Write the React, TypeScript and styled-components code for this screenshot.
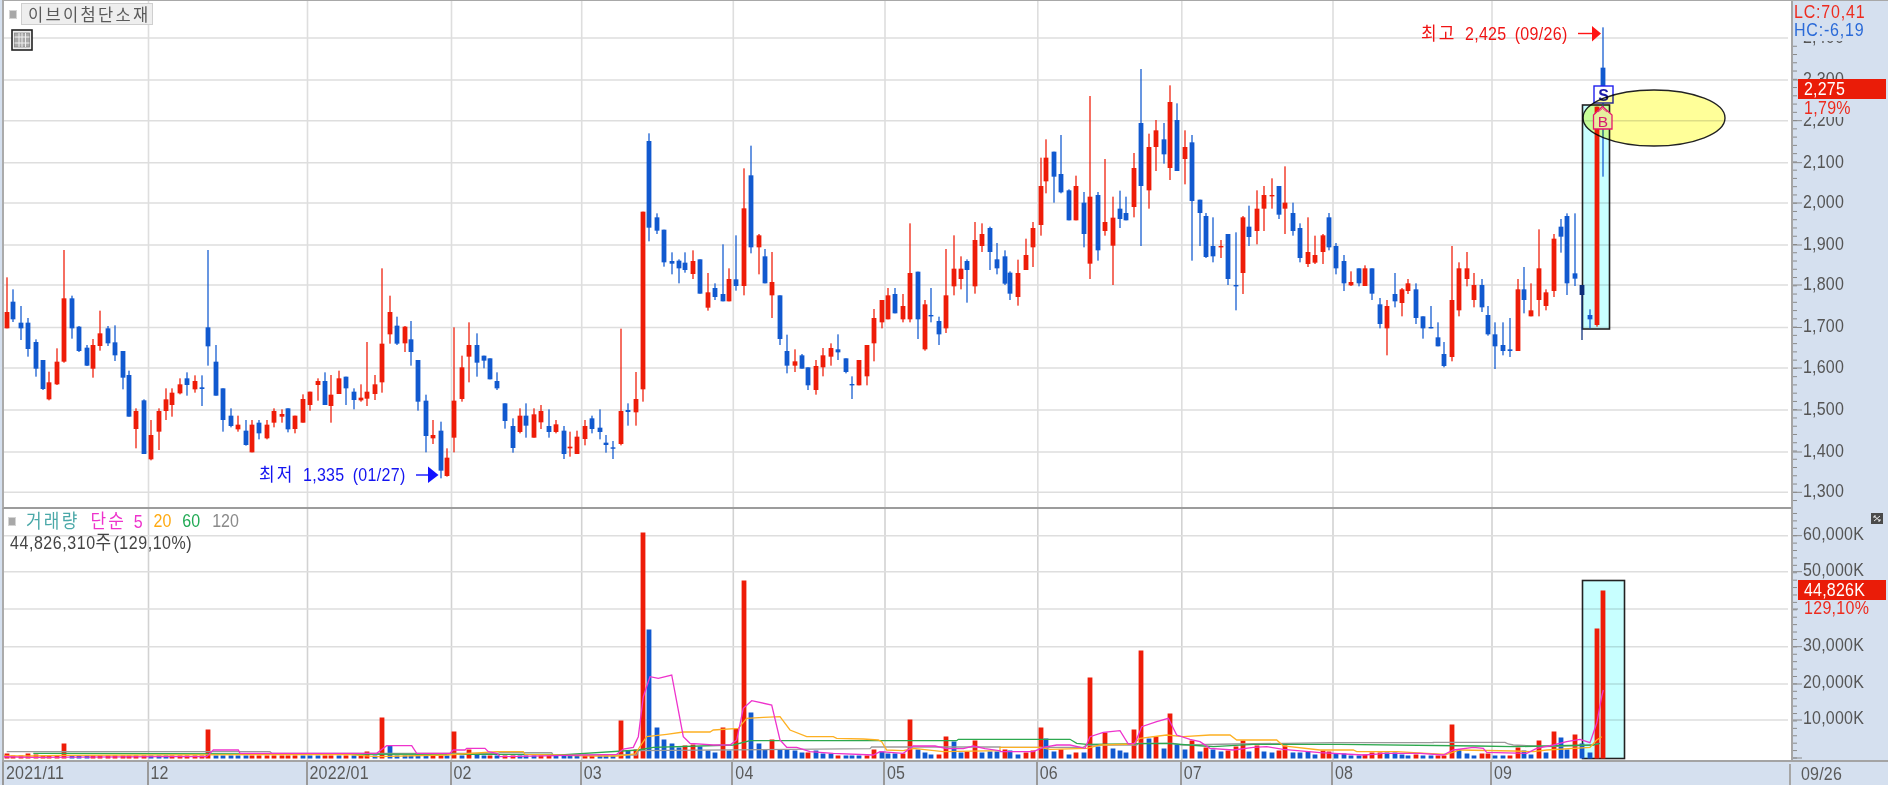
import React from "react";
import styled, { createGlobalStyle, css } from "styled-components";

type Row = [number, "R" | "B" | "D", number, number, number, number];
type Candle = { x: number; c: string; wt: number; bt: number; bb: number; wb: number };

const RED = "#ee1c08";
const BLUE = "#1159cf";
const DARK = "#0c2f7a";

const seg = (rows: Row[], ox: number, sx: number, oy: number): Candle[] =>
  rows.map(([zx, c, wt, bt, bb, wb]) => ({
    x: ox + zx / sx,
    c: c === "R" ? RED : c === "B" ? BLUE : DARK,
    wt: oy + wt / 3,
    bt: oy + bt / 3,
    bb: oy + bb / 3,
    wb: oy + wb / 3,
  }));

const S1: Row[] = [
  [21,"R",82,186,235,235],[39,"B",118,155,208,216],[62,"B",168,218,235,270],[85,"B",204,218,297,320],[107,"B",268,276,356,380],
  [129,"B",330,330,417,420],[148,"R",365,397,448,451],[170,"R",295,335,403,405],[193,"R",0,145,335,338],[215,"B",137,145,235,266],
  [238,"B",228,230,303,306],[260,"B",285,293,347,348],[278,"R",267,285,356,383],[300,"R",182,250,288,302],[323,"B",228,235,280,288],
  [345,"B",226,277,316,333],[368,"B",303,303,383,418],[386,"B",362,375,500,500],[408,"R",475,483,537,595],[431,"B",448,451,612,612],
  [453,"R",510,555,628,631],[476,"R",475,483,545,600],[498,"R",415,448,483,510],[516,"R",415,428,465,500],[539,"R",385,403,430,433],
  [561,"B",367,385,405,437],[584,"R",376,393,418,428],[606,"B",376,412,417,468],[624,"B",0,232,289,347],[647,"B",285,335,437,437],
  [669,"B",415,415,510,545],[692,"B",475,497,528,532],[714,"R",497,524,538,545],[737,"B",510,542,585,587],[755,"R",510,524,607,607],
  [777,"B",510,518,550,568],[800,"R",510,524,565,568],[822,"R",475,483,518,532],[845,"R",478,492,500,518],[863,"B",475,475,538,547],
  [885,"R",497,497,537,550],[908,"R",433,447,518,518],[930,"R",425,425,465,482],[953,"R",385,393,405,452],[975,"B",367,393,465,465],
  [993,"R",375,434,468,518],[1016,"R",362,385,432,432],[1038,"B",380,380,415,465],[1061,"B",415,425,450,478],[1083,"R",403,443,451,455],
  [1101,"R",276,425,446,468],[1124,"R",375,403,432,450],[1146,"R",55,281,397,428],[1169,"R",137,186,253,281],[1191,"B",200,227,281,285],
  [1214,"R",228,230,280,306],[1232,"B",213,268,306,347],[1255,"B",330,330,455,482],[1277,"B",434,452,558,607],[1299,"R",510,555,565,582],
  [1322,"B",515,542,662,685],[1340,"R",595,623,678,680],[1362,"R",232,452,563,607],[1385,"R",317,352,447,455],[1407,"R",217,285,320,397],
  [1430,"B",250,285,338,380],[1452,"B",317,317,332,355],[1470,"B",325,325,388,388],[1492,"B",367,393,415,420],
];
const S2: Row[] = [
  [45,"B",70,70,123,146],[68,"B",115,138,204,218],[90,"R",85,107,156,160],[108,"B",70,107,137,173],[131,"R",85,103,173,173],
  [153,"R",75,93,127,147],[176,"B",88,138,156,173],[198,"R",120,133,156,160],[221,"B",138,152,222,237],[239,"R",155,200,205,230],
  [261,"R",152,170,222,222],[284,"R",120,138,177,196],[306,"B",107,115,147,160],[329,"B",88,143,156,178],[347,"B",165,188,195,218],
  [369,"B",183,202,204,237],[392,"R",-154,93,192,196],[414,"B",70,90,96,137],[437,"R",-24,57,97,137],
];
const S3: Row[] = [
  [430,"R",335,335,868,905],[447,"B",100,123,383,424],[470,"B",340,352,392,402],[492,"B",389,389,487,500],[515,"B",457,483,491,523],
  [537,"B",478,482,505,550],[555,"B",457,488,510,518],[578,"R",451,483,522,537],[600,"B",478,478,581,581],[623,"R",519,577,623,632],
  [645,"B",550,564,591,600],[668,"B",433,582,604,604],[686,"R",505,537,604,604],[708,"B",406,538,558,572],[731,"R",205,325,558,586],
  [753,"B",137,226,442,460],[776,"R",402,406,442,523],[794,"B",447,469,550,550],[816,"R",456,546,586,654],[839,"B",586,586,717,735],
  [862,"B",704,753,797,820],[884,"R",748,784,797,816],[906,"B",762,766,806,806],[924,"B",802,802,856,870],[947,"R",780,798,870,884],
  [969,"R",744,766,802,829],[992,"R",730,744,770,797],[1014,"B",703,748,757,780],[1037,"B",775,775,816,820],[1055,"B",829,852,856,897],
  [1077,"R",780,780,856,856],[1100,"R",735,735,829,856],[1122,"R",627,654,730,784],[1145,"R",600,600,667,685],[1163,"R",564,586,658,658],
  [1185,"B",564,582,640,640],[1208,"R",582,618,658,667],[1230,"R",370,519,658,667],[1253,"B",515,515,658,717],[1275,"R",600,613,748,752],
  [1293,"B",564,645,649,667],[1316,"B",650,663,703,735],[1338,"R",447,586,685,699],[1361,"R",406,506,559,586],[1383,"R",469,506,537,568],
  [1401,"B",478,483,510,608],[1424,"R",366,420,559,581],[1446,"R",370,402,438,456],[1469,"B",380,384,456,510],[1491,"B",429,478,505,523],
];
const S4: Row[] = [
  [13,"B",601,619,701,705],[29,"B",664,668,731,750],[51,"R",629,669,741,767],[72,"R",566,615,660,660],[93,"R",516,534,592,651],
  [114,"R",323,408,525,557],[130,"R",268,323,394,430],[152,"B",305,305,380,458],[172,"B",255,372,427,430],[194,"B",418,421,511,511],
  [214,"R",377,408,511,511],[236,"B",426,458,552,592],[252,"R",138,440,641,687],[274,"B",426,435,601,632],[294,"R",327,516,543,557],
  [316,"R",440,503,587,705],[336,"B",422,476,507,534],[353,"B",440,489,511,511],[374,"R",309,354,471,502],[395,"B",57,219,408,588],
  [417,"R",251,291,421,476],[437,"R",210,241,291,363],[458,"B",219,268,313,341],[475,"R",106,156,354,390],[496,"B",160,210,363,363],
  [517,"R",241,291,327,403],[538,"B",255,277,453,632],[559,"B",449,449,489,588],[576,"B",489,498,621,624],[597,"B",502,588,619,637],
  [618,"R",570,588,592,624],[639,"B",552,552,687,705],[660,"B",547,705,708,781],[681,"R",498,502,669,732],[698,"B",467,530,561,588],
  [719,"R",421,476,543,583],[740,"R",408,435,476,543],[761,"R",385,435,439,476],[782,"B",408,408,494,507],[798,"R",349,458,476,552],
  [819,"B",458,489,543,557],[840,"B",520,534,624,637],[862,"R",502,606,642,651],[883,"R",557,615,638,642],[904,"R",552,556,606,642],
  [921,"B",489,502,592,601],[941,"B",579,588,655,673],[962,"B",615,633,700,723],[983,"R",664,696,706,708],[1004,"B",655,655,700,709],
  [1021,"R",646,655,708,708],[1042,"B",655,655,731,750],[1063,"B",744,763,822,835],[1084,"R",750,768,835,916],[1105,"B",669,732,754,772],
  [1126,"R",714,718,759,799],[1143,"R",687,700,723,732],[1164,"B",700,718,804,822],[1185,"B",799,799,835,866],[1206,"B",768,831,835,835],
  [1227,"B",817,862,889,889],[1244,"B",876,912,948,952],[1265,"R",588,750,921,934],[1286,"R",637,655,781,799],[1307,"R",606,655,687,709],
  [1328,"R",669,705,750,772],[1349,"B",687,705,772,786],[1366,"B",768,795,853,857],[1387,"B",817,853,889,957],[1408,"B",817,885,903,916],
  [1429,"B",804,898,903,921],[1450,"R",687,718,903,903],[1467,"B",651,718,750,790],[1488,"R",700,781,799,799],[1509,"R",538,655,750,799],
  [1529,"R",718,727,768,781],[1550,"R",552,566,723,741],
];
const S5: Row[] = [
  [184,"B",657,680,710,758],[202,"B",640,648,850,885],[224,"B",640,820,836,858],[247,"D",855,855,885,1020],
  [269,"B",928,945,958,985],[291,"R",320,320,975,980],[309,"B",82,203,270,530],
];

const CANDLES: Candle[] = [
  ...seg(S1, 0, 3, 250),
  ...seg(S2, 490, 3, 380),
  ...seg(S3, 500, 3, 100),
  ...seg(S4, 1000, 2.8, 50),
  ...seg(S5, 1500, 3, 0),
];

/* signed volume bar heights in px: + red, - blue, one per candle */
const VOLUME: number[] = [
  5,2,2,5,4,2,2,2,15,-3,-3,-3,3,3,3,3,3,3,3,3,-3,-3,-2,2,2,2,2,2,29,-3,
  -3,-3,-3,-3,3,3,3,3,3,3,3,-3,-3,-3,3,3,-3,3,-3,3,7,-3,41,-13,-3,-3,-3,-3,-3,3,
  3,-3,27,-3,9,-4,-2,2,-3,
  2,2,-2,-2,-2,2,2,-2,-2,-2,-2,2,2,-2,-2,-2,38,-8,9,
  226,-129,-31,-19,-15,-11,13,14,-12,-8,-6,31,-8,30,178,-46,-15,-9,19,-9,-9,-8,-6,6,-8,-5,
  -5,3,-3,-3,-3,3,9,-7,-5,-5,5,39,-9,-6,-4,4,22,-17,-6,7,18,-6,-7,-7,
  9,-8,-4,6,8,31,-20,-7,9,-4,6,-6,81,-12,26,-10,-8,-6,29,108,-20,22,-10,45,-14,-9,18,-7,11,-9,
  -7,8,12,18,-7,13,-7,-6,8,13,-6,-6,-7,-4,8,7,-5,-5,-3,-3,4,6,6,-6,-6,-4,-3,4,-2,-2,
  2,2,34,-9,-5,-3,5,5,-3,-3,3,11,
  -8,-4,18,-6,27,-21,-9,24,-15,-6,130,168,
];

type P = [number, number];
const z = (ox: number, oy: number, pts: P[]): P[] => pts.map(([a, b]) => [ox + a / 3, oy + b / 3]);
const toPts = (pts: P[]) => pts.map(([a, b]) => `${a.toFixed(1)},${b.toFixed(1)}`).join(" ");

const LINES: { color: string; pts: P[] }[] = [
  {
    color: "#9a9a9a",
    pts: [
      ...z(0, 490, [[20,785],[810,785],[815,790],[1490,790]]),
      ...z(500, 510, [[0,728],[155,728],[160,735],[410,735],[415,722],[1110,716],[1115,711],[1500,711]]),
      ...z(1000, 620, [[0,382],[250,382],[260,375],[410,375],[415,370],[520,370],[545,375],[700,372],[1000,368],[1300,368]]),
      ...z(1380, 690, [[160,157],[375,157],[385,162],[400,165],[500,170],[640,165],[655,160]]),
    ],
  },
  {
    color: "#2da84f",
    pts: [
      ...z(0, 490, [[100,790],[180,790],[760,792],[1500,793]]),
      ...z(500, 510, [[0,733],[155,733],[160,736],[415,720],[460,712],[700,705],[750,692],[1370,692],[1375,688],[1500,688]]),
      ...z(1000, 620, [[0,358],[210,358],[230,370],[260,373],[500,370],[610,378],[640,380],[760,373],[1020,373],[1430,378]]),
      ...z(1380, 690, [[290,168],[400,170],[640,165],[660,160]]),
    ],
  },
  {
    color: "#fdb022",
    pts: [
      ...z(0, 490, [[0,798],[100,798],[180,796],[760,794],[1050,794],[1130,800],[1340,795],[1490,785]]),
      ...z(500, 510, [[0,725],[70,725],[75,733],[155,735],[290,738],[350,738],[405,732],[440,680],[500,673],[550,666],[630,666],[640,660],[715,655],[740,625],[790,622],[840,620],[870,660],[920,680],[1000,680],[1010,685],[1090,687],[1135,690],[1145,695],[1160,720],[1210,722],[1240,715],[1330,725],[1500,722]]),
      ...z(1000, 620, [[0,382],[120,382],[150,388],[260,385],[300,375],[400,372],[420,355],[500,345],[550,350],[630,345],[690,345],[710,360],[830,360],[850,378],[960,390],[1060,390],[1070,395],[1140,395]]),
      ...z(1380, 690, [[0,185],[50,185],[140,190],[200,193],[240,180],[400,183],[460,185],[500,180],[630,172],[650,150],[665,140]]),
    ],
  },
  {
    color: "#ee33cc",
    pts: [
      ...z(0, 490, [[0,800],[100,802],[500,800],[620,800],[640,780],[715,780],[720,790],[1130,790],[1160,767],[1235,767],[1250,790],[1350,790],[1360,780],[1395,780],[1400,775],[1455,775],[1465,785],[1490,790]]),
      ...z(500, 510, [[0,740],[350,733],[370,717],[400,712],[415,680],[430,560],[450,500],[475,505],[515,495],[550,680],[570,700],[640,705],[690,705],[710,690],[730,595],[755,572],[815,585],[840,690],[860,712],[890,712],[930,725],[1000,730],[1120,735],[1140,725],[1210,730],[1240,708],[1305,708],[1340,716],[1390,716],[1420,708],[1455,716],[1500,722]]),
      ...z(1000, 620, [[0,395],[100,395],[130,382],[170,375],[210,375],[255,385],[270,350],[310,337],[360,332],[385,372],[405,370],[425,320],[470,305],[505,295],[530,345],[570,358],[600,365],[630,385],[700,390],[760,382],[800,380],[850,388],[960,398],[1090,405],[1140,402]]),
      ...z(1380, 690, [[0,190],[120,190],[190,195],[220,180],[280,172],[310,175],[320,187],[440,190],[470,175],[520,165],[560,155],[600,148],[630,158],[650,100],[665,20],[670,0]]),
    ],
  },
];

const PRICE_GRID: [string, number][] = [
  ["2,400",38],["2,300",80],["2,200",120.7],["2,100",162.7],["2,000",203],["1,900",245],
  ["1,800",285],["1,700",327.5],["1,600",368],["1,500",410],["1,400",452],["1,300",492.3],
];
const VOLUME_GRID: [string, number][] = [
  ["60,000K",535.7],["50,000K",571.7],["40,000K",609],["30,000K",646.7],["20,000K",684],["10,000K",720],
];
/* the 40,000K label sits under the current-value note, as it does on the real chart */
const VOLUME_LABELS = VOLUME_GRID.filter(([t]) => t !== "40,000K");
const VOL_BASE = 758.5;
const MONTHS: [string, number][] = [
  ["2021/11",4],["12",148.5],["2022/01",307.5],["02",451.5],["03",581.7],["04",733.3],
  ["05",885],["06",1037.8],["07",1181.8],["08",1333],["09",1492],
];
const PLOT_RIGHT = 1791;
const AXIS_LEFT = PLOT_RIGHT;
const PRICE_TOP = 1;
const PRICE_H = 506;
const VOL_TOP = 509;
const VOL_H = 251;

const minorTicks = (ys: number[], from: number, to: number) => {
  const step = (ys[ys.length - 1] - ys[0]) / (ys.length - 1) / 5;
  const out: number[] = [];
  for (let y = ys[0] - step * Math.floor((ys[0] - from) / step); y < to; y += step) out.push(y);
  return out;
};

const GlobalStyle = createGlobalStyle`
  html, body { margin: 0; padding: 0; background: #d5e0ef; overflow: hidden; }
`;

const textBase = css`
  font-family: "Liberation Sans", "Noto Sans CJK KR", sans-serif;
  font-size: 16px;
  line-height: 18px;
  white-space: nowrap;
`;

const Root = styled.div`
  width: 1888px;
  height: 785px;
  display: flex;
  flex-direction: column;
  background: #d5e0ef;
  padding-left: 2px;
  box-sizing: border-box;
  overflow: hidden;
  filter: blur(0.4px);
`;

const Pane = styled.section<{ $h: number; $top?: boolean }>`
  display: flex;
  height: ${(p) => p.$h}px;
  flex: none;
  box-sizing: border-box;
  ${(p) => p.$top && "border-top: 1px solid #a8a8a8;"}
`;

const Plot = styled.div<{ $divider?: boolean }>`
  position: relative;
  width: 1789px;
  flex: none;
  box-sizing: border-box;
  background: #fff;
  border-left: 2px solid #ababab;
  ${(p) => p.$divider && "border-bottom: 2px solid #9c9c9c;"}
`;

const Chart = styled.svg`
  display: block;
  width: 100%;
  height: 100%;
`;

const Blend = styled.rect`
  mix-blend-mode: multiply;
`;

const BlendEllipse = styled.ellipse`
  mix-blend-mode: multiply;
`;

const Axis = styled.aside`
  position: relative;
  flex: 1;
  border-left: 2px solid #a6a6a6;
  background: #d5e0ef;
  overflow: hidden;
`;

const AxisTicks = styled.svg`
  position: absolute;
  left: 0;
  top: 0;
  width: 96px;
  height: 100%;
`;

const AxisLabel = styled.span`
  ${textBase}
  position: absolute;
  left: 10px;
  color: #555;
  letter-spacing: 0.2px;
  transform: translateY(-50%) scaleY(1.12);
`;

const StatLine = styled.div<{ $color: string }>`
  ${textBase}
  color: ${(p) => p.$color};
  height: 18px;
  line-height: 18px;
  letter-spacing: 0.8px;
  transform: scaleY(1.12);
  transform-origin: left center;
`;

const Stats = styled.div`
  position: absolute;
  left: 0;
  top: 2px;
  width: 100%;
  padding: 0 0 2px 1px;
  background: #d5e0ef;
`;

const Flag = styled.div`
  position: absolute;
  left: 5px;
  width: 88px;
  height: 19.5px;
  background: #ea1c08;
  color: #fff;
  padding-left: 6px;
  box-sizing: border-box;
  ${textBase}
  line-height: 19.5px;
  letter-spacing: 0.2px;
`;

const FlagNote = styled.div`
  position: absolute;
  left: 5px;
  width: 88px;
  height: 18px;
  background: #d5e0ef;
  color: #ee2b1e;
  padding-left: 6px;
  box-sizing: border-box;
  ${textBase}
  line-height: 18px;
  letter-spacing: 0.3px;
`;

const Tall = styled.span`
  display: inline-block;
  transform: scaleY(1.12);
`;

const StockTag = styled.div`
  position: absolute;
  left: 5px;
  top: 2px;
  display: flex;
  align-items: center;
  gap: 4px;
`;

const Bullet = styled.i`
  display: block;
  width: 6px;
  height: 7px;
  background: #a8a8a8;
  border: 1px solid #d4d4d4;
`;

const TagName = styled.div`
  ${textBase}
  font-family: "Noto Sans CJK KR", sans-serif;
  font-size: 16.5px;
  letter-spacing: 2.3px;
  color: #5a5a5a;
  background: #eee;
  border: 1px solid #cfcfcf;
  height: 20px;
  line-height: 20px;
  padding: 0 2px 0 6px;
`;

const TableButton = styled.svg`
  position: absolute;
  left: 7px;
  top: 28px;
  width: 22px;
  height: 22px;
`;

const Note = styled.div<{ $color: string }>`
  ${textBase}
  position: absolute;
  color: ${(p) => p.$color};
  word-spacing: 3.5px;
  letter-spacing: 0.3px;
  transform: scaleY(1.1);
`;

const Legend = styled.div`
  position: absolute;
  left: 4px;
  top: 3px;
  display: flex;
  flex-direction: column;
  gap: 2px;
`;

const LegendRow = styled.div`
  display: flex;
  align-items: center;
  gap: 5px;
  ${textBase}
  height: 18px;
`;

const LegendItem = styled.span<{ $color: string; $ml?: number }>`
  color: ${(p) => p.$color};
  margin-left: ${(p) => p.$ml ?? 0}px;
  word-spacing: 3px;
  transform: scaleY(1.12);
`;

const Hangul = styled.span`
  font-family: "Noto Sans CJK KR", sans-serif;
  font-size: 17px;
  letter-spacing: 2.2px;
`;

const LegendValue = styled.div`
  ${textBase}
  color: #444;
  margin-left: 2px;
  letter-spacing: 0.55px;
  transform: scaleY(1.12);
  transform-origin: left center;
`;

const ResizeIcon = styled.svg`
  position: absolute;
  right: 3px;
  top: 4px;
  width: 12px;
  height: 11px;
`;

const TimeAxis = styled.footer`
  display: flex;
  flex: 1;
  border-top: 2px solid #a4a4a4;
  margin-left: 0;
`;

const MonthCell = styled.div`
  ${textBase}
  flex: none;
  box-sizing: border-box;
  color: #5a5a5a;
  padding-left: 2px;
  border-left: 2px solid #9a9a9a;
  height: 100%;
  line-height: 22px;
  letter-spacing: 0.2px;
`;

const EndDate = styled.div`
  ${textBase}
  flex: 1;
  margin-top: 2px;
  border-left: 2px solid #a6a6a6;
  padding-left: 10px;
  color: #5a5a5a;
  line-height: 20px;
  letter-spacing: 0.2px;
`;

const Rects = ({ items, fill }: { items: [number, number, number, number][]; fill: string }) => (
  <g fill={fill}>
    {items.map(([x, y, w, h], i) => (
      <rect key={i} x={x} y={y} width={w} height={h} />
    ))}
  </g>
);

const VGrid = ({ top, bottom, color }: { top: number; bottom: number; color: string }) => (
  <g stroke={color} strokeWidth={1.6}>
    {MONTHS.slice(1).map(([m, x]) => (
      <line key={m} x1={x} x2={x} y1={top} y2={bottom} />
    ))}
  </g>
);

const HGrid = ({ ys, color }: { ys: number[]; color: string }) => (
  <g stroke={color} strokeWidth={1.5}>
    {ys.map((y) => (
      <line key={y} x1={4} x2={1788} y1={y} y2={y} />
    ))}
  </g>
);

const PriceChart = () => (
  <Chart viewBox={`4 ${PRICE_TOP} 1787 ${PRICE_H}`} preserveAspectRatio="none">
    <VGrid top={PRICE_TOP} bottom={PRICE_TOP + PRICE_H} color="#dedede" />
    <HGrid ys={PRICE_GRID.map((g) => g[1])} color="#dedede" />
    <Blend x={1582.5} y={105} width={27} height={224} fill="#c8ffff" stroke="#222" strokeWidth={1.6} />
    {CANDLES.map((k, i) => {
      const x = Math.round(k.x);
      return (
        <g key={i} fill={k.c}>
          <rect x={x - 0.7} y={k.wt} width={1.4} height={Math.max(k.wb - k.wt, 1)} opacity={0.9} />
          <rect x={x - 2.4} y={k.bt} width={4.8} height={Math.max(k.bb - k.bt, 1.4)} />
        </g>
      );
    })}
    <rect x={1594} y={86} width={19} height={17} fill="#fff" stroke="#2020ee" strokeWidth={1.4} />
    <text x={1603.5} y={101} textAnchor="middle" fontFamily="Liberation Sans" fontSize={16} fontWeight={700} fill="#1c1caa">S</text>
    <BlendEllipse cx={1654} cy={118} rx={71} ry={28} fill="#ffff99" stroke="#222" strokeWidth={1.4} />
    <path d="M1593.5 115 L1602.5 106.5 L1612 115 L1612 129 L1593.5 129 Z" fill="#e6ee9e" stroke="#e6186e" strokeWidth={1.3} />
    <path d="M1598 112 L1602.5 108.5 L1607 112" fill="none" stroke="#e6186e" strokeWidth={0.8} />
    <text x={1603} y={127} textAnchor="middle" fontFamily="Liberation Sans" fontSize={15.5} fill="#d81b6e">B</text>
    <path d="M1578 33.5 H1593" stroke="#ff1414" strokeWidth={1.4} />
    <path d="M1592 26 L1601 33.5 L1592 41.5 Z" fill="#ff1414" />
    <path d="M416 475 H429" stroke="#1212ff" strokeWidth={1.4} />
    <path d="M428 466.5 L438.5 475 L428 483 Z" fill="#1212ff" />
  </Chart>
);

const barItems = (sign: number): [number, number, number, number][] =>
  VOLUME.map((v, i) => ({ v, i }))
    .filter(({ v }) => v * sign > 0)
    .map(({ v, i }) => {
      const h = Math.max(Math.abs(v), 3);
      return [Math.round(CANDLES[i].x) - 2.4, VOL_BASE - h, 4.8, h];
    });

const VolumeChart = () => (
  <Chart viewBox={`4 ${VOL_TOP} 1787 ${VOL_H}`} preserveAspectRatio="none">
    <VGrid top={VOL_TOP} bottom={VOL_TOP + VOL_H} color="#d2d2d2" />
    <HGrid ys={VOLUME_GRID.map((g) => g[1])} color="#dedede" />
    <Blend x={1582.5} y={580.5} width={42} height={178} fill="#c8ffff" stroke="#222" strokeWidth={1.6} />
    <Rects fill={RED} items={barItems(1)} />
    <Rects fill={BLUE} items={barItems(-1)} />
    {LINES.map((l) => (
      <polyline key={l.color} points={toPts(l.pts)} fill="none" stroke={l.color} strokeWidth={1.3} />
    ))}
  </Chart>
);

const Ticks = ({ majors, from, to, offset }: { majors: number[]; from: number; to: number; offset: number }) => (
  <AxisTicks>
    <g stroke="#8a8a8a" strokeWidth={1}>
      {minorTicks(majors, from, to).map((y) => (
        <line key={y} x1={0} x2={4} y1={y - offset} y2={y - offset} />
      ))}
      {majors.map((y) => (
        <line key={y} x1={0} x2={9} y1={y - offset} y2={y - offset} />
      ))}
    </g>
  </AxisTicks>
);

export default function App() {
  const priceYs = PRICE_GRID.map((g) => g[1]);
  const volYs = [...VOLUME_GRID.map((g) => g[1]), VOL_BASE - 0.5];
  return (
    <Root>
      <GlobalStyle />
      <Pane $h={509} $top>
        <Plot $divider>
          <PriceChart />
          <StockTag>
            <Bullet />
            <TagName>이브이첨단소재</TagName>
          </StockTag>
          <TableButton viewBox="0 0 22 22">
            <rect x="1" y="1" width="20" height="20" fill="#eee" stroke="#222" strokeWidth="1.6" />
            <rect x="3.5" y="4" width="15" height="14" fill="#aaa" stroke="#888" strokeWidth="0.8" />
            <path d="M8 4 V18 M11 4 V18 M14.5 4 V18 M3.5 8 H18.5 M3.5 14 H18.5" stroke="#efefef" strokeWidth="1" />
          </TableButton>
          <Note $color="#f01414" style={{ left: 1417, top: 22 }}>
            <Hangul>최고</Hangul> 2,425 (09/26)
          </Note>
          <Note $color="#1414f0" style={{ left: 255, top: 463 }}>
            <Hangul>최저</Hangul> 1,335 (01/27)
          </Note>
        </Plot>
        <Axis>
          <Ticks majors={priceYs} from={46} to={508} offset={1} />
          {PRICE_GRID.map(([t, y]) => (
            <AxisLabel key={t} style={{ top: y - 2.2 }}>{t}</AxisLabel>
          ))}
          <Stats>
            <StatLine $color="#ee2b1e">LC:70,41</StatLine>
            <StatLine $color="#2a6ad8">HC:-6,19</StatLine>
          </Stats>
          <FlagNote style={{ top: 98 }}><Tall>1,79%</Tall></FlagNote>
          <Flag style={{ top: 78 }}><Tall>2,275</Tall></Flag>
        </Axis>
      </Pane>
      <Pane $h={251}>
        <Plot>
          <VolumeChart />
          <Legend>
            <LegendRow>
              <Bullet />
              <LegendItem $color="#4aa8a8" $ml={5}><Hangul>거래량</Hangul></LegendItem>
              <LegendItem $color="#ee33cc" $ml={6}><Hangul>단순</Hangul> 5</LegendItem>
              <LegendItem $color="#ffaa11" $ml={6}>20</LegendItem>
              <LegendItem $color="#22aa55" $ml={6}>60</LegendItem>
              <LegendItem $color="#8a8a8a" $ml={7}>120</LegendItem>
            </LegendRow>
            <LegendValue>44,826,310<Hangul>주</Hangul>(129,10%)</LegendValue>
          </Legend>
        </Plot>
        <Axis>
          <Ticks majors={volYs} from={512} to={760} offset={VOL_TOP} />
          {VOLUME_LABELS.map(([t, y]) => (
            <AxisLabel key={t} style={{ top: y - VOL_TOP - 1.6 }}>{t}</AxisLabel>
          ))}
          <FlagNote style={{ top: 90 }}><Tall>129,10%</Tall></FlagNote>
          <Flag style={{ top: 71 }}><Tall>44,826K</Tall></Flag>
          <ResizeIcon style={{ right: 5 }} viewBox="0 0 12 11">
            <rect width="12" height="11" fill="#4a4a4a" />
            <path d="M3 3 L9 8 M9 3 L3 8 M3 3 h2 M3 3 v2 M9 8 h-2 M9 8 v-2" stroke="#e8e8e8" strokeWidth="1" fill="none" />
          </ResizeIcon>
        </Axis>
      </Pane>
      <TimeAxis>
        {MONTHS.map(([m, x], i) => {
          const next = i + 1 < MONTHS.length ? MONTHS[i + 1][1] : AXIS_LEFT;
          return (
            <MonthCell key={m} style={{ width: next - x }}>
              <Tall>{m}</Tall>
            </MonthCell>
          );
        })}
        <EndDate><Tall>09/26</Tall></EndDate>
      </TimeAxis>
    </Root>
  );
}
